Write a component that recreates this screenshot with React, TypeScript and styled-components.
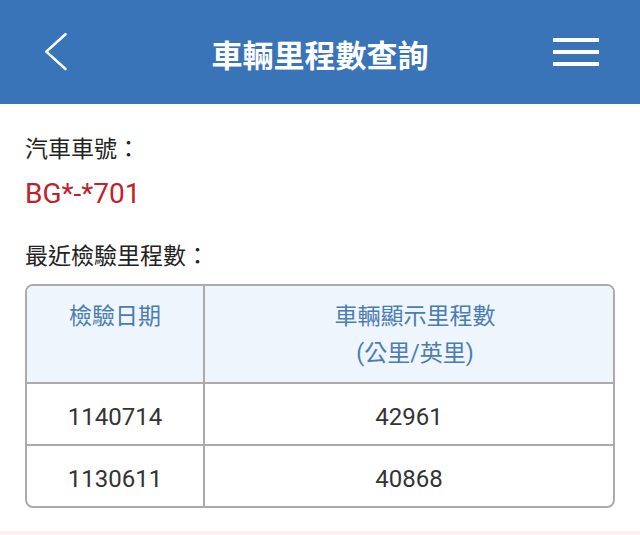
import styled, { createGlobalStyle } from 'styled-components';

const GlobalStyle = createGlobalStyle`
  html, body {
    margin: 0;
    padding: 0;
    background: #ffffff;
  }
  body {
    font-family: Roboto, "Noto Sans CJK TC", "Noto Sans", sans-serif;
    color: #222;
  }
`;

const Page = styled.div`
  width: 640px;
  min-height: 535px;
  background: #fff;
`;

const TopBar = styled.header`
  height: 104px;
  background: #3a74b8;
  display: grid;
  grid-template-columns: 1fr auto 1fr;
  align-items: center;
`;

const BackButton = styled.button`
  justify-self: start;
  margin-left: 44px;
  padding: 0;
  border: 0;
  background: none;
  width: 24px;
  height: 40px;
  display: flex;
  cursor: pointer;
`;

const Title = styled.h1`
  margin: 8px 0 0;
  font-size: 31px;
  line-height: 31px;
  font-weight: 700;
  color: #fff;
  letter-spacing: 0;
`;

const MenuButton = styled.button`
  justify-self: end;
  margin-right: 41px;
  padding: 0;
  border: 0;
  background: none;
  display: flex;
  flex-direction: column;
  gap: 7.5px;
  cursor: pointer;
`;

const MenuBar = styled.span`
  display: block;
  width: 46px;
  height: 4.5px;
  background: #fff;
`;

const Content = styled.main`
  padding: 31px 25px 0;
  display: flex;
  flex-direction: column;
`;

const Label = styled.div`
  font-size: 23px;
  line-height: 30px;
  color: #222;
`;

const Plate = styled.div`
  margin-top: 12px;
  font-size: 28px;
  line-height: 34px;
  color: #c0222c;
  margin-bottom: 31px;
`;

const MileTable = styled.table`
  margin-top: 12px;
  width: 590px;
  border-collapse: separate;
  border-spacing: 0;
  border: 2px solid #ababab;
  border-radius: 8px;
  overflow: hidden;
  table-layout: fixed;
`;

const HeadCell = styled.th<{ $first?: boolean }>`
  background: #eef5fc;
  color: #4b7db3;
  font-weight: 400;
  font-size: 23px;
  line-height: 37px;
  vertical-align: top;
  padding: ${p => (p.$first ? '12px 8px 10px' : '12px 8px 10px 20px')};
  text-align: center;
  border-bottom: 2px solid #ababab;
  border-right: ${p => (p.$first ? '2px solid #ababab' : '0')};
  width: ${p => (p.$first ? '160px' : 'auto')};
`;

const Cell = styled.td<{ $first?: boolean; $last?: boolean }>`
  height: 54px;
  padding: 6px 8px 0;
  text-align: center;
  vertical-align: middle;
  font-size: 24px;
  color: #333;
  border-right: ${p => (p.$first ? '2px solid #ababab' : '0')};
  border-bottom: ${p => (p.$last ? '0' : '2px solid #ababab')};
`;

const Footer = styled.div`
  margin-top: 23px;
  height: 5px;
  background: #fdf1f3;
`;

const records = [
  { date: '1140714', mileage: '42961' },
  { date: '1130611', mileage: '40868' },
];

const App = () => {
  return (
    <Page>
      <GlobalStyle />
      <TopBar>
        <BackButton aria-label="返回">
          <svg width="24" height="40" viewBox="0 0 24 40" fill="none">
            <path
              d="M21.5 2.2 L2.3 19.6 L21.5 37"
              stroke="#fff"
              strokeWidth="2.6"
              strokeLinecap="round"
              strokeLinejoin="round"
            />
          </svg>
        </BackButton>
        <Title>車輛里程數查詢</Title>
        <MenuButton aria-label="選單">
          <MenuBar />
          <MenuBar />
          <MenuBar />
        </MenuButton>
      </TopBar>

      <Content>
        <Label>汽車車號：</Label>
        <Plate>BG*-*701</Plate>
        <Label>最近檢驗里程數：</Label>
        <MileTable>
          <thead>
            <tr>
              <HeadCell $first>檢驗日期</HeadCell>
              <HeadCell>
                車輛顯示里程數
                <br />
                (公里/英里)
              </HeadCell>
            </tr>
          </thead>
          <tbody>
            {records.map((r, i) => (
              <tr key={r.date}>
                <Cell $first $last={i === records.length - 1}>{r.date}</Cell>
                <Cell $last={i === records.length - 1}>{r.mileage}</Cell>
              </tr>
            ))}
          </tbody>
        </MileTable>
      </Content>
      <Footer />
    </Page>
  );
};

export default App;
